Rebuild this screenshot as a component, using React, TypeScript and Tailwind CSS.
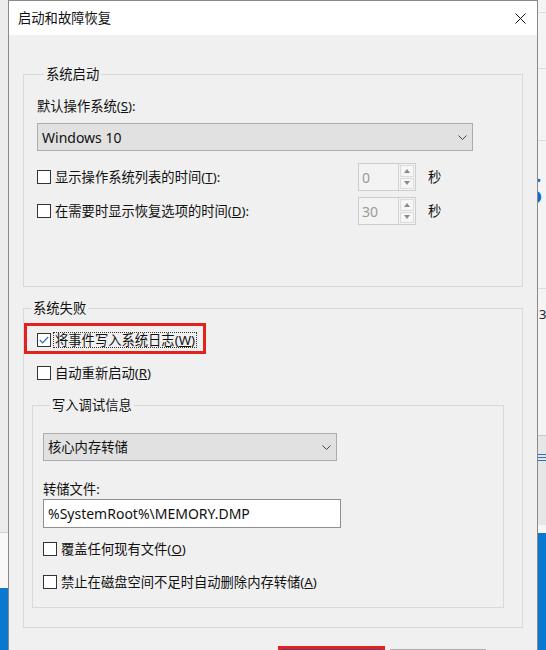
import React from 'react';

function Checkbox({ checked = false }: { checked?: boolean }) {
  return (
    <span className="w-[14px] h-[14px] shrink-0 border border-[#333] bg-white flex items-center justify-center">
      {checked && (
        <svg width="10" height="8" viewBox="0 0 10 8">
          <polyline points="0.8,4 3.6,6.8 9.2,1" fill="none" stroke="#2f6db5" strokeWidth="1.2" />
        </svg>
      )}
    </span>
  );
}

function Chevron() {
  return (
    <svg width="9" height="5" viewBox="0 0 9 5">
      <polyline points="0.5,0.5 4.5,4.5 8.5,0.5" fill="none" stroke="#444" strokeWidth="1" />
    </svg>
  );
}

function Spinner({ value }: { value: string }) {
  return (
    <div className="flex w-[58px] h-[28px] border border-[#cdcdcd] bg-[#f3f3f3]">
      <div className="flex-1 flex items-center pl-[3px] text-[14px] text-[#9a9a9a]">{value}</div>
      <div className="w-[17px] flex flex-col p-[1px] gap-[1px] border-l border-[#d4d4d4]">
        <div className="flex-1 flex items-center justify-center border border-[#dcdcdc] bg-[#f6f6f6]">
          <svg width="6" height="4" viewBox="0 0 6 4">
            <polygon points="3,0 6,4 0,4" fill="#8a8a8a" />
          </svg>
        </div>
        <div className="flex-1 flex items-center justify-center border border-[#dcdcdc] bg-[#f6f6f6]">
          <svg width="6" height="4" viewBox="0 0 6 4">
            <polygon points="0,0 6,0 3,4" fill="#8a8a8a" />
          </svg>
        </div>
      </div>
    </div>
  );
}

function LeftStrip() {
  return (
    <div className="w-[8px] shrink-0 flex flex-col">
      <div className="h-[533px] bg-[#ececec] border-b border-[#d2d2d2]" />
      <div className="h-[55px] bg-[#f8f8f8]" />
      <div className="flex-1 bg-[#0b78d0]" />
    </div>
  );
}

function RightStrip() {
  return (
    <div className="w-[8px] shrink-0 flex flex-col overflow-hidden bg-[#f4f4f4]">
      <div className="h-[13px] shrink-0 border-b border-[#dcdcdc]" />
      <div className="h-[56px] shrink-0 border-b border-[#dcdcdc]" />
      <div className="h-[72px] shrink-0 border-b border-[#dcdcdc]" />
      <div className="h-[148px] shrink-0 border-b border-[#dcdcdc]">
        <div className="mt-[30px] -ml-[15px] whitespace-nowrap text-[36px] leading-[40px] text-[#1769c2]">S</div>
      </div>
      <div className="h-[147px] shrink-0 border-b border-[#c8c8c8]">
        <div className="mt-[17px] ml-[1px] text-[13px] leading-[16px] text-[#222]">3</div>
      </div>
      <div className="h-[89px] shrink-0 bg-[#e6e6e6] pt-[17px]">
        <svg width="8" height="10" viewBox="0 0 8 10">
          <line x1="0" y1="1.5" x2="8" y2="1.5" stroke="#2a72c5" />
          <line x1="0" y1="4.5" x2="8" y2="4.5" stroke="#2a72c5" />
          <line x1="0" y1="7.5" x2="8" y2="7.5" stroke="#2a72c5" />
        </svg>
      </div>
      <div className="h-[8px] shrink-0 bg-[#f7f7f7]" />
      <div className="flex-1 bg-[#0b78d0]" />
    </div>
  );
}

export default function App() {
  return (
    <div className="w-[546px] h-[650px] overflow-hidden flex bg-[#f2f2f2] text-[13.3px] text-[#111] font-['Noto_Sans','Noto_Sans_CJK_SC',sans-serif]">
      <LeftStrip />
      <div className="w-[530px] shrink-0 flex flex-col border-x border-t border-[#8a8a8a]">
        <div className="h-[34px] shrink-0 bg-white flex items-center justify-between pl-[9px] pr-[11px]">
          <span className="leading-[18px]">启动和故障恢复</span>
          <svg width="11" height="11" viewBox="0 0 11 11">
            <line x1="0.5" y1="0.5" x2="10.5" y2="10.5" stroke="#111" strokeWidth="1" />
            <line x1="10.5" y1="0.5" x2="0.5" y2="10.5" stroke="#111" strokeWidth="1" />
          </svg>
        </div>

        <div className="flex-1 bg-[#f0f0f0] px-[14px] pt-[30px]">
          {/* 系统启动 */}
          <fieldset className="border border-[#d9d9d9] pl-[13px] pb-[61px]">
            <legend className="ml-[7px] px-[2px] leading-[18px]">系统启动</legend>
            <div className="mt-[14px] leading-[18px]">
              默认操作系统(<u>S</u>):
            </div>
            <div className="mt-[8px] w-[436px] h-[28px] border border-[#adadad] bg-[#e1e1e1] flex items-center justify-between pl-[4px] pr-[5px]">
              <span className="text-[14px]">Windows 10</span>
              <Chevron />
            </div>
            <div className="mt-[12px] h-[28px] flex items-center">
              <div className="w-[321px] flex items-center">
                <Checkbox />
                <span className="ml-[4px] leading-[18px]">
                  显示操作系统列表的时间(<u>T</u>):
                </span>
              </div>
              <Spinner value="0" />
              <span className="ml-[12px] leading-[18px]">秒</span>
            </div>
            <div className="mt-[6px] h-[28px] flex items-center">
              <div className="w-[321px] flex items-center">
                <Checkbox />
                <span className="ml-[4px] leading-[18px]">
                  在需要时显示恢复选项的时间(<u>D</u>):
                </span>
              </div>
              <Spinner value="30" />
              <span className="ml-[12px] leading-[18px]">秒</span>
            </div>
          </fieldset>

          {/* 系统失败 */}
          <fieldset className="mt-[12px] border border-[#d9d9d9] pb-[19px]">
            <legend className="ml-[7px] px-[2px] leading-[18px]">系统失败</legend>
            <div className="mt-[6px] w-[182px] h-[31px] border-[3px] border-[#e0231f] flex items-center pl-[10px] pt-[3px]">
              <Checkbox checked />
              <span className="ml-[2px] px-[1px] leading-[14px] whitespace-nowrap border border-dotted border-[#333]">
                将事件写入系统日志(<u>W</u>)
              </span>
            </div>
            <div className="mt-[10px] pl-[13px] flex items-center h-[18px]">
              <Checkbox />
              <span className="ml-[4px] leading-[18px]">
                自动重新启动(<u>R</u>)
              </span>
            </div>

            {/* 写入调试信息 */}
            <fieldset className="mt-[14px] ml-[8px] w-[472px] border border-[#d9d9d9] pl-[10px] pb-[16px]">
              <legend className="ml-[7px] px-[2px] leading-[18px]">写入调试信息</legend>
              <div className="mt-[19px] w-[294px] h-[28px] border border-[#adadad] bg-[#e1e1e1] flex items-center justify-between pl-[4px] pr-[5px]">
                <span className="leading-[18px]">核心内存转储</span>
                <Chevron />
              </div>
              <div className="mt-[19px] leading-[18px]">转储文件:</div>
              <div className="mt-[1px] w-[298px] h-[29px] border border-[#8f8f8f] bg-white flex items-center pl-[4px]">
                <span className="text-[14px]">%SystemRoot%\MEMORY.DMP</span>
              </div>
              <div className="mt-[12px] flex items-center h-[18px]">
                <Checkbox />
                <span className="ml-[4px] leading-[18px]">
                  覆盖任何现有文件(<u>O</u>)
                </span>
              </div>
              <div className="mt-[15px] flex items-center h-[18px]">
                <Checkbox />
                <span className="ml-[4px] leading-[18px]">
                  禁止在磁盘空间不足时自动删除内存转储(<u>A</u>)
                </span>
              </div>
            </fieldset>
          </fieldset>

          <div className="mt-[18px] flex justify-end items-start gap-[5px] pr-[37px]">
            <div className="w-[107px] h-[32px] border-[3px] border-[#e0231f]">
              <div className="h-full border-2 border-[#6b3b73] bg-[#e5f1fb]" />
            </div>
            <div className="mt-[3px] w-[96px] h-[28px] border border-[#adadad] bg-[#e1e1e1]" />
          </div>
        </div>
      </div>
      <RightStrip />
    </div>
  );
}
